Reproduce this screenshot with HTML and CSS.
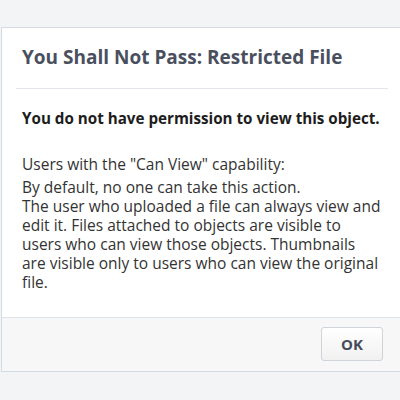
FILE: index.html
```html
<!DOCTYPE html>
<html>
<head>
<meta charset="utf-8">
<link rel="stylesheet" href="styles.css">
</head>
<body>
<div class="dialog">
  <div class="dialog-header">
    <h1 class="dialog-title">You Shall Not Pass: Restricted File</h1>
  </div>
  <div class="dialog-body">
    <p class="lead">You do not have permission to view this object.</p>
    <p class="cap-title">Users with the "Can View" capability:</p>
    <p class="cap-desc">By default, no one can take this action.<br>The user who uploaded a file can always view and edit it. Files attached to objects are visible to users who can view those objects. Thumbnails are visible only to users who can view the original file.</p>
  </div>
  <div class="dialog-footer">
    <button class="btn">OK</button>
  </div>
</div>
</body>
</html>
```

FILE: styles.css
```css
html, body {
  margin: 0;
  padding: 0;
  background: #f3f4f6;
  overflow: hidden;
}
body {
  font-family: "Open Sans", "Noto Sans", sans-serif;
  color: #333;
}
.dialog {
  margin: 27px 0 0 1px;
  width: 400px;
  background: #fff;
  border: 1px solid #d5dbe3;
}
.dialog-header {
  margin: 0 14px;
  padding: 17px 6px 19px;
  border-bottom: 1px solid #e3e7ec;
}
.dialog-title {
  margin: 0;
  font-size: 19px;
  line-height: 24px;
  font-weight: 700;
  color: #4a4f5e;
}
.dialog-body {
  padding: 19px 20px 25px;
  width: 360px;
}
.lead {
  margin: 0 0 27px;
  font-size: 15.2px;
  line-height: 20px;
  font-weight: 700;
  color: #1d1d1d;
  white-space: nowrap;
}
.cap-title {
  margin: 0 0 5px;
  font-size: 15.5px;
  line-height: 18px;
  color: #333;
}
.cap-desc {
  margin: 0;
  font-size: 15.5px;
  line-height: 19px;
  color: #333;
}
.dialog-footer {
  display: flex;
  justify-content: flex-end;
  padding: 9px 19px 10px;
  background: #f7f7f7;
  border-top: 1px solid #dde3ea;
}
.btn {
  width: 62px;
  height: 34px;
  font-family: "Open Sans", "Noto Sans", sans-serif;
  font-size: 15px;
  font-weight: 700;
  color: #464c5c;
  background: linear-gradient(#ffffff, #f1f1f1);
  border: 1px solid #cfd3da;
  border-radius: 3px;
}
```
